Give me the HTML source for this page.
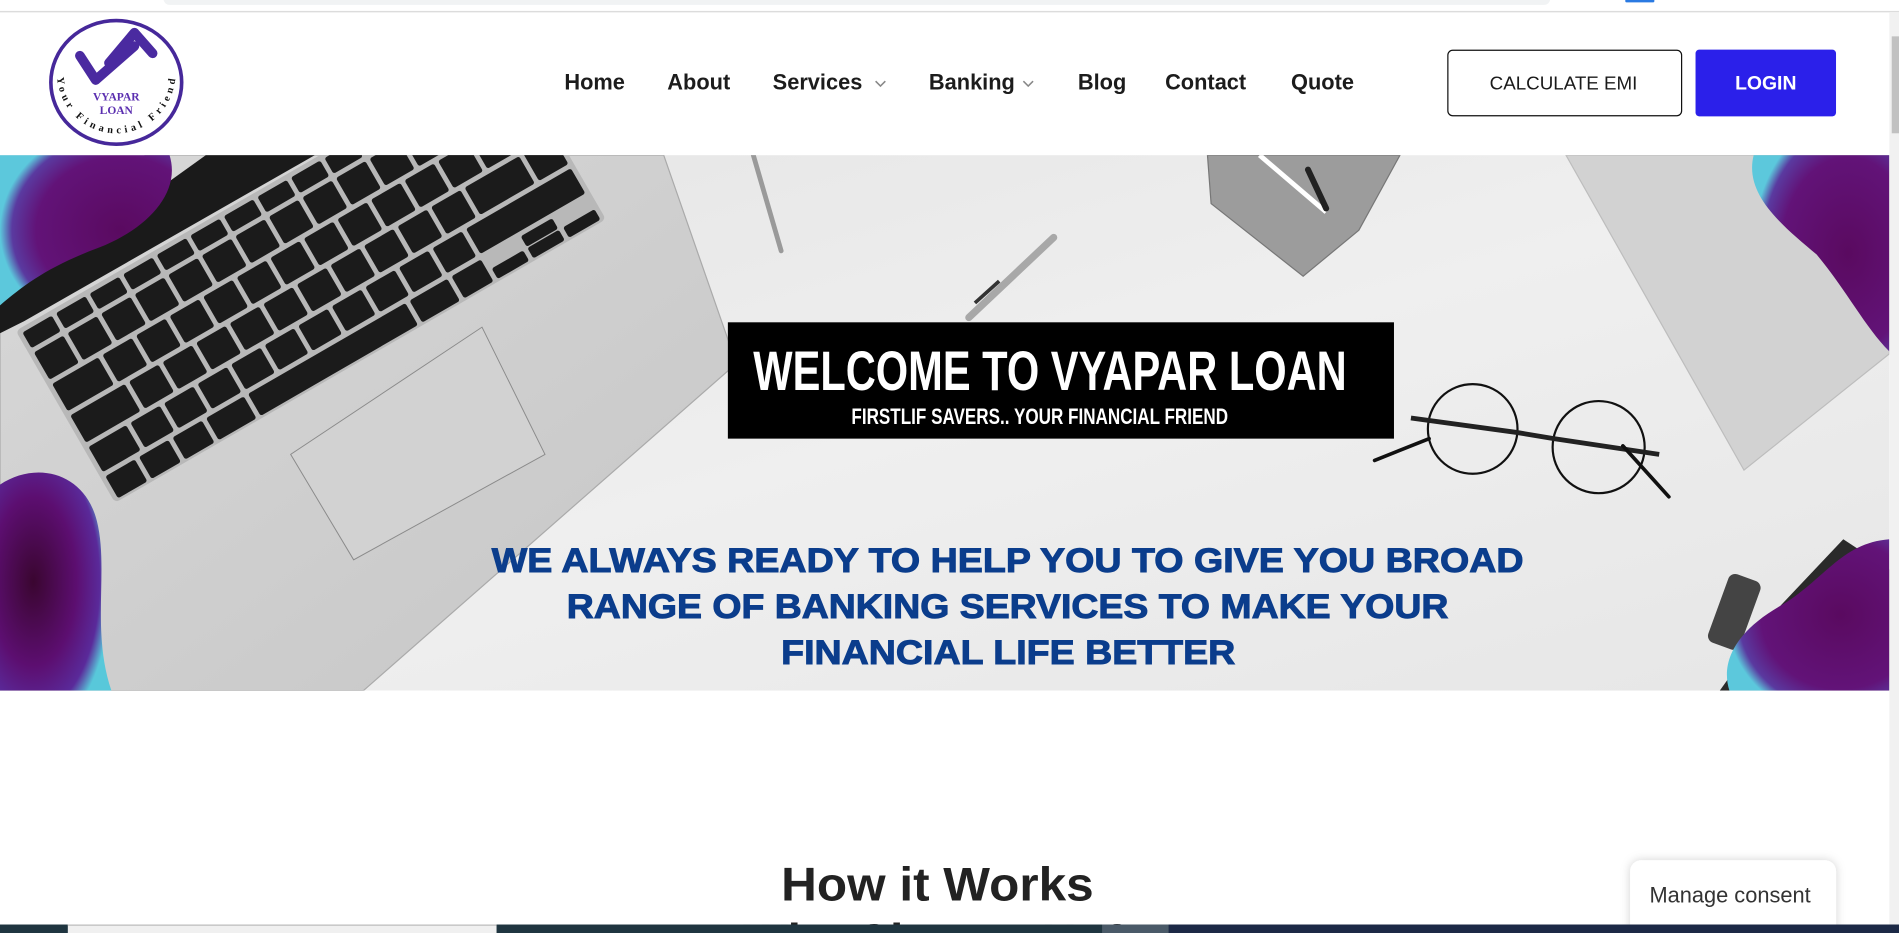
<!DOCTYPE html>
<html><head><meta charset="utf-8"><style>
html,body{margin:0;padding:0;background:#fff;overflow:hidden}
svg{display:block}
text{font-family:"Liberation Sans",sans-serif}
</style></head><body>
<svg width="1899" height="933" viewBox="0 0 1568 770" preserveAspectRatio="none" xmlns="http://www.w3.org/2000/svg">
<defs>
<linearGradient id="hero" x1="0" y1="0" x2="1" y2="1">
<stop offset="0" stop-color="#e4e4e4"/><stop offset="0.5" stop-color="#efefef"/><stop offset="1" stop-color="#e6e6e6"/></linearGradient>
<linearGradient id="body" x1="0" y1="0" x2="1" y2="1">
<stop offset="0" stop-color="#d8d8d8"/><stop offset="1" stop-color="#c6c6c6"/></linearGradient>
<radialGradient id="blob" cx="0.3" cy="0.5" r="0.7">
<stop offset="0" stop-color="#3a0630"/><stop offset="0.55" stop-color="#5c0e70"/><stop offset="0.85" stop-color="#5a2a9a"/><stop offset="1" stop-color="#58c8da"/></radialGradient>
<radialGradient id="blob2" cx="0.7" cy="0.5" r="0.7">
<stop offset="0" stop-color="#5a0a60"/><stop offset="0.7" stop-color="#621378"/><stop offset="0.9" stop-color="#5a3aa0"/><stop offset="1" stop-color="#5cc8dc"/></radialGradient>
<filter id="sh" x="-20%" y="-20%" width="140%" height="140%"><feDropShadow dx="0" dy="0" stdDeviation="4" flood-color="#000" flood-opacity="0.18"/></filter>
<clipPath id="hc"><rect x="0" y="128" width="1560" height="442"/></clipPath>
<path id="arc" d="M 47 60 A 49 50 0 0 0 145 60"/>
</defs>

<rect x="0" y="0" width="1568" height="10" fill="#fff"/>
<rect x="135" y="-6" width="1145" height="10" rx="5" fill="#f1f3f4"/>
<rect x="1342" y="-2" width="24" height="4" rx="1" fill="#2a7ae2"/>
<rect x="0" y="9" width="1568" height="1.2" fill="#dcdcdc"/>

<!-- logo -->
<ellipse cx="96" cy="68" rx="54" ry="51" fill="#fff" stroke="#46289a" stroke-width="3"/>
<polyline points="66,46 79,66 111,38" fill="none" stroke="#4a2aa0" stroke-width="8" stroke-linecap="round" stroke-linejoin="round"/>
<polyline points="90,52 111,27 126,44" fill="none" stroke="#4a2aa0" stroke-width="8" stroke-linecap="round" stroke-linejoin="round"/>
<text x="96" y="83" font-weight="bold" font-size="9.5" fill="#5b2fb0" text-anchor="middle" style="font-family:'Liberation Serif',serif">VYAPAR</text>
<text x="96" y="94" font-weight="bold" font-size="9.5" fill="#5b2fb0" text-anchor="middle" style="font-family:'Liberation Serif',serif">LOAN</text>
<text font-size="8.5" font-weight="bold" fill="#111" style="font-family:'Liberation Serif',serif"><textPath href="#arc" startOffset="4" textLength="146" lengthAdjust="spacing">Your Financial Friend</textPath></text>

<!-- nav -->
<g font-size="18" font-weight="bold" fill="#1c1c1c">
<text x="466" y="74">Home</text>
<text x="551" y="74">About</text>
<text x="638" y="74">Services</text>
<text x="767" y="74">Banking</text>
<text x="890" y="74">Blog</text>
<text x="962" y="74">Contact</text>
<text x="1066" y="74">Quote</text>
</g>
<polyline points="723,67 727,71 731,67" fill="none" stroke="#888" stroke-width="1.3"/>
<polyline points="845,67 849,71 853,67" fill="none" stroke="#888" stroke-width="1.3"/>

<rect x="1195.5" y="41.5" width="193" height="54" rx="4" fill="#fff" stroke="#111" stroke-width="1"/>
<text x="1291" y="74" font-size="15.5" font-weight="500" fill="#1a1a1a" text-anchor="middle">CALCULATE EMI</text>
<rect x="1400" y="41" width="116" height="55" rx="3" fill="#2b20ea"/>
<text x="1458" y="74" font-size="16" font-weight="bold" fill="#fff" text-anchor="middle">LOGIN</text>

<!-- hero -->
<g clip-path="url(#hc)">
<rect x="0" y="128" width="1560" height="442" fill="url(#hero)"/>
<polygon points="1293,128 1560,128 1560,292 1440,388" fill="#d2d2d2" stroke="#bdbdbd"/>
<polygon points="997,128 1156,128 1122,190 1076,228 1000,168" fill="#9c9c9c" stroke="#777"/>
<line x1="1040" y1="128" x2="1095" y2="175" stroke="#fff" stroke-width="4"/>
<line x1="1080" y1="140" x2="1095" y2="172" stroke="#222" stroke-width="5" stroke-linecap="round"/>
<line x1="622" y1="128" x2="645" y2="207" stroke="#9a9a9a" stroke-width="4" stroke-linecap="round"/>
<line x1="800" y1="262" x2="870" y2="196" stroke="#a8a8a8" stroke-width="6" stroke-linecap="round"/>
<line x1="805" y1="250" x2="825" y2="232" stroke="#333" stroke-width="3"/>
<circle cx="1216" cy="354" r="37" fill="none" stroke="#111" stroke-width="1.8"/>
<circle cx="1320" cy="369" r="38" fill="none" stroke="#111" stroke-width="1.8"/>
<path d="M1165 345 L1253 357 L1283 362 L1370 375" fill="none" stroke="#222" stroke-width="4"/>
<line x1="1180" y1="362" x2="1135" y2="380" stroke="#111" stroke-width="3" stroke-linecap="round"/>
<line x1="1340" y1="368" x2="1378" y2="410" stroke="#111" stroke-width="3" stroke-linecap="round"/>
<polygon points="1522,445 1560,470 1560,570 1420,570 1470,500" fill="#2a2a2a"/>
<rect x="1418" y="475" width="28" height="60" rx="6" fill="#444" transform="rotate(20 1432 505)"/>

<!-- laptop body -->
<polygon points="120,128 548,128 608,300 300,570 0,570 0,270" fill="url(#body)" stroke="#aaa"/>
<polygon points="0,250 170,128 260,128 20,265 0,275" fill="#1a1a1a"/>
<g transform="translate(95,415) rotate(-30)">
<rect x="0" y="-164" width="468" height="164" rx="4" fill="#b8b8b8"/>
<g fill="#1b1b1b">
<rect x="4" y="-160" width="28" height="15" rx="2"/><rect x="36" y="-160" width="28" height="15" rx="2"/><rect x="68" y="-160" width="28" height="15" rx="2"/><rect x="100" y="-160" width="28" height="15" rx="2"/><rect x="132" y="-160" width="28" height="15" rx="2"/><rect x="164" y="-160" width="28" height="15" rx="2"/><rect x="196" y="-160" width="28" height="15" rx="2"/><rect x="228" y="-160" width="28" height="15" rx="2"/><rect x="260" y="-160" width="28" height="15" rx="2"/><rect x="292" y="-160" width="28" height="15" rx="2"/><rect x="324" y="-160" width="28" height="15" rx="2"/><rect x="356" y="-160" width="28" height="15" rx="2"/><rect x="388" y="-160" width="28" height="15" rx="2"/><rect x="420" y="-160" width="44" height="15" rx="2"/>
<rect x="4" y="-141" width="28" height="26" rx="2"/><rect x="36" y="-141" width="28" height="26" rx="2"/><rect x="68" y="-141" width="28" height="26" rx="2"/><rect x="100" y="-141" width="28" height="26" rx="2"/><rect x="132" y="-141" width="28" height="26" rx="2"/><rect x="164" y="-141" width="28" height="26" rx="2"/><rect x="196" y="-141" width="28" height="26" rx="2"/><rect x="228" y="-141" width="28" height="26" rx="2"/><rect x="260" y="-141" width="28" height="26" rx="2"/><rect x="292" y="-141" width="28" height="26" rx="2"/><rect x="324" y="-141" width="28" height="26" rx="2"/><rect x="356" y="-141" width="28" height="26" rx="2"/><rect x="388" y="-141" width="28" height="26" rx="2"/><rect x="420" y="-141" width="44" height="26" rx="2"/>
<rect x="4" y="-111" width="44" height="26" rx="2"/><rect x="52" y="-111" width="28" height="26" rx="2"/><rect x="84" y="-111" width="28" height="26" rx="2"/><rect x="116" y="-111" width="28" height="26" rx="2"/><rect x="148" y="-111" width="28" height="26" rx="2"/><rect x="180" y="-111" width="28" height="26" rx="2"/><rect x="212" y="-111" width="28" height="26" rx="2"/><rect x="244" y="-111" width="28" height="26" rx="2"/><rect x="276" y="-111" width="28" height="26" rx="2"/><rect x="308" y="-111" width="28" height="26" rx="2"/><rect x="340" y="-111" width="28" height="26" rx="2"/><rect x="372" y="-111" width="28" height="26" rx="2"/><rect x="404" y="-111" width="28" height="26" rx="2"/><rect x="436" y="-111" width="28" height="56" rx="2"/>
<rect x="4" y="-81" width="52" height="26" rx="2"/><rect x="60" y="-81" width="28" height="26" rx="2"/><rect x="92" y="-81" width="28" height="26" rx="2"/><rect x="124" y="-81" width="28" height="26" rx="2"/><rect x="156" y="-81" width="28" height="26" rx="2"/><rect x="188" y="-81" width="28" height="26" rx="2"/><rect x="220" y="-81" width="28" height="26" rx="2"/><rect x="252" y="-81" width="28" height="26" rx="2"/><rect x="284" y="-81" width="28" height="26" rx="2"/><rect x="316" y="-81" width="28" height="26" rx="2"/><rect x="348" y="-81" width="28" height="26" rx="2"/><rect x="380" y="-81" width="52" height="26" rx="2"/>
<rect x="4" y="-51" width="36" height="24" rx="2"/><rect x="44" y="-51" width="28" height="24" rx="2"/><rect x="76" y="-51" width="28" height="24" rx="2"/><rect x="108" y="-51" width="28" height="24" rx="2"/><rect x="140" y="-51" width="28" height="24" rx="2"/><rect x="172" y="-51" width="28" height="24" rx="2"/><rect x="204" y="-51" width="28" height="24" rx="2"/><rect x="236" y="-51" width="28" height="24" rx="2"/><rect x="268" y="-51" width="28" height="24" rx="2"/><rect x="300" y="-51" width="28" height="24" rx="2"/><rect x="332" y="-51" width="28" height="24" rx="2"/><rect x="364" y="-51" width="100" height="24" rx="2"/>
<rect x="4" y="-23" width="28" height="21" rx="2"/><rect x="36" y="-23" width="28" height="21" rx="2"/><rect x="68" y="-23" width="28" height="21" rx="2"/><rect x="100" y="-23" width="36" height="21" rx="2"/><rect x="140" y="-23" width="150" height="21" rx="2"/><rect x="294" y="-23" width="36" height="21" rx="2"/><rect x="334" y="-23" width="28" height="21" rx="2"/><rect x="366" y="-12" width="30" height="10" rx="2"/><rect x="400" y="-23" width="30" height="10" rx="2"/><rect x="400" y="-12" width="30" height="10" rx="2"/><rect x="434" y="-12" width="30" height="10" rx="2"/>
</g>
</g>
<polygon points="240,375 398,270 450,375 292,462" fill="#d2d2d2" stroke="#8a8a8a" stroke-width="0.8"/>

<path d="M0 128 L140 128 C150 160 120 190 80 205 C40 220 20 235 0 252 Z" fill="url(#blob2)"/>
<path d="M0 400 C30 380 70 390 80 430 C90 470 75 520 92 570 L0 570 Z" fill="url(#blob)"/>
<path d="M1448 128 L1560 128 L1560 290 C1540 270 1525 240 1500 210 C1470 185 1440 160 1448 128 Z" fill="url(#blob2)"/>
<path d="M1560 445 C1520 448 1505 480 1470 500 C1435 520 1420 545 1428 570 L1560 570 Z" fill="url(#blob2)"/>
</g>

<rect x="601" y="266" width="550" height="96" fill="#000"/>
<text x="622" y="322" font-size="46" font-weight="bold" fill="#fff" textLength="490" lengthAdjust="spacingAndGlyphs">WELCOME TO VYAPAR LOAN</text>
<text x="703" y="350" font-size="18" font-weight="bold" fill="#fff" textLength="311" lengthAdjust="spacingAndGlyphs">FIRSTLIF SAVERS.. YOUR FINANCIAL FRIEND</text>

<g font-size="28" font-weight="bold" fill="#0b3d8c" stroke="#0b3d8c" stroke-width="0.8">
<text x="406" y="472" textLength="852" lengthAdjust="spacingAndGlyphs">WE ALWAYS READY TO HELP YOU TO GIVE YOU BROAD</text>
<text x="468" y="510" textLength="728" lengthAdjust="spacingAndGlyphs">RANGE OF BANKING SERVICES TO MAKE YOUR</text>
<text x="645" y="548" textLength="375" lengthAdjust="spacingAndGlyphs">FINANCIAL LIFE BETTER</text>
</g>

<text x="774" y="743" font-size="39" font-weight="bold" fill="#222" text-anchor="middle" textLength="258" lengthAdjust="spacingAndGlyphs">How it Works</text>
<text x="774" y="790" font-size="39" font-weight="bold" fill="#222" text-anchor="middle">Why Choose Us?</text>

<rect x="1346" y="710" width="170" height="75" rx="9" fill="#fff" filter="url(#sh)"/>
<text x="1362" y="745" font-size="18" fill="#333">Manage consent</text>

<rect x="1560" y="10" width="8" height="760" fill="#f1f1f1"/>
<rect x="1562" y="30" width="6" height="80" fill="#c1c1c1"/>

<rect x="0" y="763" width="1568" height="7" fill="#1f3540"/>
<rect x="56" y="763" width="354" height="7" fill="#f0f0f0"/>
<rect x="56" y="763" width="354" height="1" fill="#bbb"/>
<rect x="910" y="763" width="55" height="7" fill="#4a5a68"/>
<rect x="965" y="763" width="603" height="7" fill="#1c2946"/>
</svg>
</body></html>
